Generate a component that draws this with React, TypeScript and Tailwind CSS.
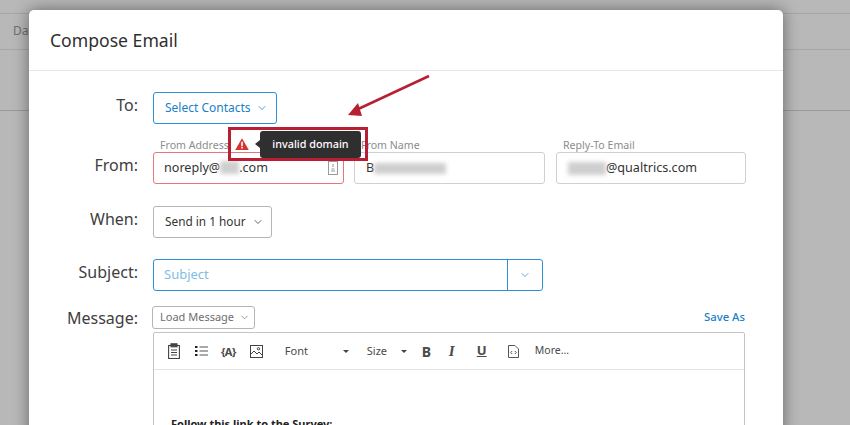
import { ChevronDown } from 'lucide-react';

const font = { fontFamily: '"Noto Sans", sans-serif' };

function Label({ children }: { children: string }) {
  return <div className="w-[109px] shrink-0 text-right text-[16px] leading-[22px] text-[#404040]">{children}</div>;
}

function Blur({ className }: { className: string }) {
  return <span className={`inline-block bg-[#cfcfcf] blur-[2px] ${className}`} />;
}

function FieldLabel({ children }: { children: string }) {
  return <div className="h-[14px] pl-[7px] text-[10.6px] leading-[14px] text-[#8c8c8c]">{children}</div>;
}

function ToolbarIcons() {
  return (
    <div className="flex h-[37px] items-center border-b border-[#e4e4e4] text-[#4a4a4a]">
      <svg className="ml-[14px]" width="12" height="16" viewBox="0 0 12 16" fill="none" stroke="#444" strokeWidth="1.1">
        <rect x="0.6" y="2.5" width="10.8" height="13" />
        <rect x="3" y="0.8" width="6" height="3" fill="#444" />
        <path d="M3 7h6M3 9.5h6M3 12h6" />
      </svg>
      <svg className="ml-[15px]" width="13" height="12" viewBox="0 0 13 12" fill="none">
        <path d="M0 2h2.5M0 6h2.5M0 10h2.5" stroke="#222" strokeWidth="2.2" />
        <path d="M4.5 2H13M4.5 6H13M4.5 10H13" stroke="#555" strokeWidth="1" />
      </svg>
      <span className="ml-[13px] text-[11px] font-bold leading-none tracking-[-0.5px]">{'{A}'}</span>
      <svg className="ml-[14px]" width="13" height="13" viewBox="0 0 13 13" fill="none" stroke="#444" strokeWidth="1">
        <rect x="0.5" y="0.5" width="12" height="12" />
        <path d="M1 9l3-3 3 3 2-2 3 3" />
        <circle cx="8.5" cy="3.8" r="1.2" />
      </svg>
      <span className="ml-[22px] w-[58px] text-[11px]">Font</span>
      <span className="h-0 w-0 border-x-[3px] border-t-[3px] border-x-transparent border-t-[#444]" />
      <span className="ml-[18px] w-[34px] text-[11px]">Size</span>
      <span className="h-0 w-0 border-x-[3px] border-t-[3px] border-x-transparent border-t-[#444]" />
      <span className="ml-[15px] w-[27px] text-[14px] font-bold">B</span>
      <span className="w-[28px] text-[15px] font-bold italic" style={{ fontFamily: '"Liberation Serif", serif' }}>I</span>
      <span className="w-[31px] text-[13px] font-bold underline">U</span>
      <svg width="11" height="13" viewBox="0 0 11 13" fill="none" stroke="#444" strokeWidth="0.9">
        <path d="M0.5 0.5h6.5l3.5 3.5v8.5h-10z" />
        <path d="M4.2 6l-1.5 1.5 1.5 1.5M6.8 6l1.5 1.5-1.5 1.5" />
      </svg>
      <span className="ml-[16px] text-[10.5px]">More...</span>
    </div>
  );
}

export default function App() {
  return (
    <div style={font} className="relative h-[425px] w-[850px] overflow-hidden bg-[#b8b8b8]">
      <div className="mt-[13px] h-[37px] border-t border-b border-[#a6a6a6] pl-[13px] pt-[9px] text-[12px] leading-[16px] text-[#6e6e6e]">Dat</div>
      <div className="h-[61px] border-b border-[#9a9a9a]" />

      <div className="absolute left-[29px] top-[10px] h-[430px] w-[754px] rounded-[5px] bg-white shadow-[0_0_16px_rgba(0,0,0,0.45)]">
        <div className="flex h-[61px] items-center border-b border-[#e6e6e6] pl-[21px] text-[17.6px] text-[#2f2f2f]">Compose Email</div>

        <div className="pr-[37px]">
          <div className="mt-[21px] flex items-start gap-[15px]">
            <div className="pt-[2px]"><Label>To:</Label></div>
            <div className="flex h-[32px] w-[124px] items-center gap-[5px] rounded-[3px] border border-[#2f8fd6] pl-[11px] text-[12px] text-[#1a7fc9]">
              Select Contacts
              <ChevronDown size={12} strokeWidth={1.5} />
            </div>
          </div>

          <div className="mt-[14px] flex items-end gap-[15px]">
            <div className="pb-[8px]"><Label>From:</Label></div>
            <div className="w-[191px]">
              <FieldLabel>From Address</FieldLabel>
              <div className="flex h-[32px] items-center justify-between rounded-[3px] border border-[#e5767c] pl-[10px] pr-[5px] text-[12.6px] text-[#333]">
                <span className="flex items-center">noreply@<Blur className="h-[13px] w-[19px]" />.com</span>
                <svg width="10" height="14" viewBox="0 0 10 14" fill="none" stroke="#999" strokeWidth="1">
                  <rect x="0.5" y="0.5" width="9" height="13" />
                  <path d="M5 3v3M3 10h4M3.5 8h3" />
                </svg>
              </div>
            </div>
            <div className="ml-[-5px] w-[191px]">
              <FieldLabel>From Name</FieldLabel>
              <div className="flex h-[32px] items-center rounded-[3px] border border-[#d0d0d0] pl-[11px] text-[12.6px] text-[#333]">
                B<Blur className="h-[11px] w-[72px]" />
              </div>
            </div>
            <div className="ml-[-4px] w-[190px]">
              <FieldLabel>Reply-To Email</FieldLabel>
              <div className="flex h-[32px] items-center rounded-[3px] border border-[#d0d0d0] pl-[11px] text-[12.6px] text-[#333]">
                <Blur className="h-[13px] w-[38px]" />@qualtrics.com
              </div>
            </div>
          </div>

          <div className="mt-[22px] flex items-center gap-[15px]">
            <div className="pb-[6px]"><Label>When:</Label></div>
            <div className="flex h-[32px] w-[119px] items-center gap-[6px] rounded-[3px] border border-[#b5b5b5] pl-[11px] text-[11.8px] text-[#333]">
              Send in 1 hour
              <ChevronDown size={12} strokeWidth={1.5} />
            </div>
          </div>

          <div className="mt-[21px] flex items-center gap-[15px]">
            <div className="pb-[6px]"><Label>Subject:</Label></div>
            <div className="flex h-[32px] w-[390px] rounded-[3px] border border-[#2f8fd6] text-[13px] text-[#84bce6]">
              <div className="flex flex-1 items-center pl-[10px]">Subject</div>
              <div className="flex w-[35px] items-center justify-center border-l border-[#2f8fd6] text-[#2f8fd6]">
                <ChevronDown size={12} strokeWidth={1.5} />
              </div>
            </div>
          </div>

          <div className="mt-[15px] flex items-start gap-[14px]">
            <div className="pt-[1px]"><Label>Message:</Label></div>
            <div className="mr-[1px] flex-1">
              <div className="flex items-center justify-between">
                <div className="flex h-[23px] w-[103px] items-center gap-[5px] rounded-[3px] border border-[#b5b5b5] pl-[7px] text-[11px] text-[#6e6e6e]">
                  Load Message
                  <ChevronDown size={11} strokeWidth={1.5} />
                </div>
                <span className="text-[11.3px] font-medium text-[#1a7fc9]">Save As</span>
              </div>
              <div className="ml-[1px] mt-[3px] h-[100px] rounded-[2px] border border-[#c4c4c4]">
                <ToolbarIcons />
                <div className="pl-[17px] pt-[46px] text-[11px] font-bold text-[#222]">Follow this link to the Survey:</div>
              </div>
            </div>
          </div>
        </div>
      </div>

      {/* warning + tooltip over the fields */}
      <svg className="absolute left-[235px] top-[138px]" width="14" height="12" viewBox="0 0 14 12">
        <path d="M7 0.3L13.8 12H0.2z" fill="#d6322e" />
        <path d="M6.2 3.8h1.6v4.4H6.2zM6.2 9h1.6v1.6H6.2z" fill="#fff" />
      </svg>
      <div className="absolute left-[260px] top-[131px] flex h-[27px] w-[101px] items-center justify-center rounded-[3px] bg-[#2f2f2f] text-[10.8px] font-medium text-white">
        invalid domain
        <span className="absolute left-[-5px] top-[9px] h-0 w-0 border-y-[4px] border-r-[5px] border-y-transparent border-r-[#2f2f2f]" />
      </div>

      {/* annotation */}
      <div className="absolute left-[228px] top-[127px] h-[34px] w-[140px] border-[3px] border-[#b81f33]" />
      <svg className="absolute left-[340px] top-[70px]" width="95" height="50" viewBox="0 0 95 50" fill="none">
        <path d="M89 6L14 41" stroke="#b81f33" strokeWidth="2.5" />
        <path d="M8 45L18 33L22 46z" fill="#b81f33" />
      </svg>
    </div>
  );
}
